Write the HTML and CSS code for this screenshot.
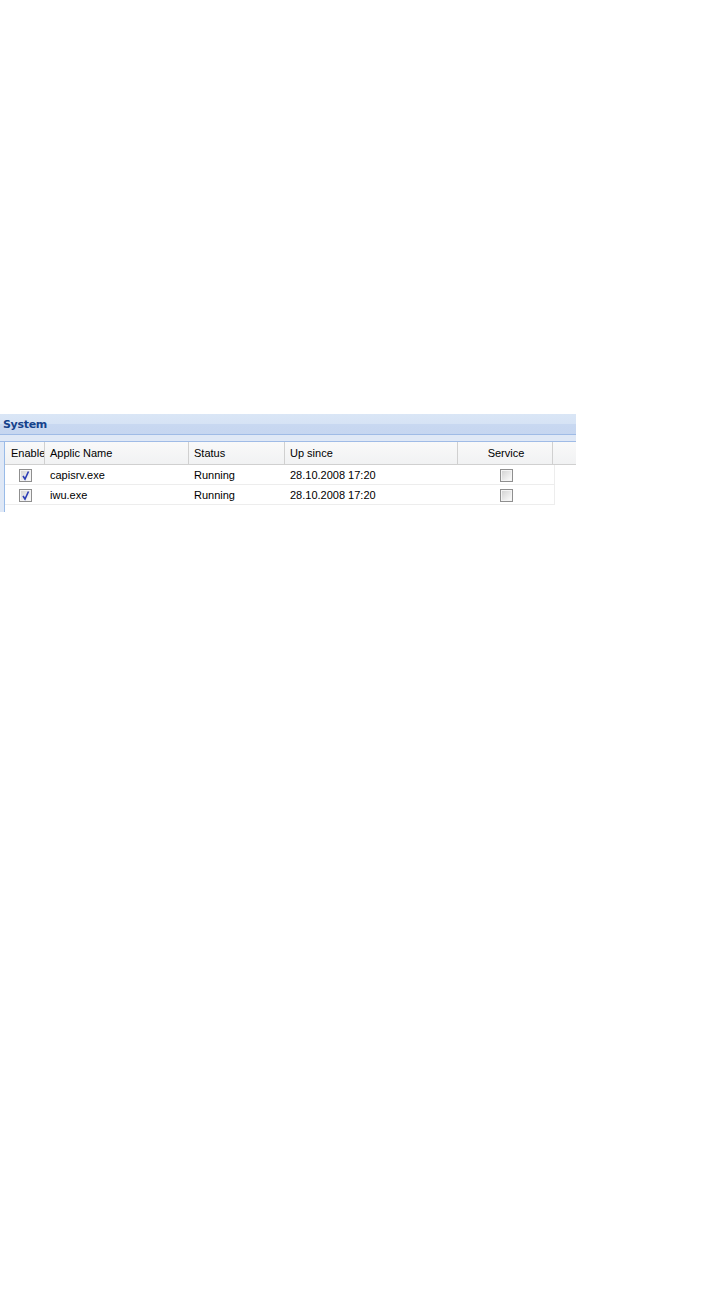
FILE: index.html
```html
<!DOCTYPE html>
<html>
<head>
<meta charset="utf-8">
<link rel="stylesheet" href="styles.css">
</head>
<body>
<div class="panel">
  <div class="panel-header"><span class="title">System</span></div>
  <div class="panel-tbar"></div>
  <div class="panel-body">
    <div class="grid">
      <div class="grid-head">
        <div class="hcell c-en">Enabled</div>
        <div class="hcell c-name">Applic Name</div>
        <div class="hcell c-status">Status</div>
        <div class="hcell c-up">Up since</div>
        <div class="hcell c-svc center">Service</div>
        <div class="hcell c-fill"></div>
      </div>
      <div class="row">
        <div class="cell c-en center"><span class="cb"><svg class="tick" viewBox="0 0 11 11" width="11" height="11"><path d="M3 6 L5 9 L8.5 1.5" fill="none" stroke="#2b3db5" stroke-width="1.6"/></svg></span></div>
        <div class="cell c-name">capisrv.exe</div>
        <div class="cell c-status">Running</div>
        <div class="cell c-up">28.10.2008 17:20</div>
        <div class="cell c-svc center"><span class="cb"></span></div>
      </div>
      <div class="row">
        <div class="cell c-en center"><span class="cb"><svg class="tick" viewBox="0 0 11 11" width="11" height="11"><path d="M3 6 L5 9 L8.5 1.5" fill="none" stroke="#2b3db5" stroke-width="1.6"/></svg></span></div>
        <div class="cell c-name">iwu.exe</div>
        <div class="cell c-status">Running</div>
        <div class="cell c-up">28.10.2008 17:20</div>
        <div class="cell c-svc center"><span class="cb"></span></div>
      </div>
    </div>
  </div>
</div>
</body>
</html>
```
FILE: styles.css
```css
html, body {
  margin: 0;
  padding: 0;
  background: #fff;
  font-family: "Liberation Sans", Arial, sans-serif;
  font-size: 11px;
  color: #000;
}
.panel {
  width: 576px;
  margin-top: 414px;
}
.panel-header {
  height: 20px;
  background: linear-gradient(#dae6f6 0%, #d6e3f5 50%, #c8d8f1 51%, #c6d6f0 100%);
  display: flex;
  align-items: center;
  padding-left: 3px;
}
.title {
  font-family: "DejaVu Sans", Verdana, sans-serif;
  font-weight: bold;
  font-size: 11px;
  letter-spacing: -0.3px;
  color: #15428b;
}
.panel-tbar {
  height: 6px;
  background: #dfe8f6;
  border-top: 1px solid #9fbbe6;
  border-bottom: 1px solid #9fbbe6;
}
.panel-body {
  background: #dfe8f6;
  padding-left: 4px;
  height: 70px;
}
.grid {
  height: 70px;
  background: #fff;
  border-left: 1px solid #99bbe8;
}
.grid-head {
  display: flex;
  height: 22px;
  background: linear-gradient(#f9f9f9, #f1f2f3);
  border-bottom: 1px solid #d0d0d0;
}
.hcell {
  box-sizing: border-box;
  height: 22px;
  line-height: 22px;
  padding-left: 5px;
  border-right: 1px solid #d0d0d0;
  white-space: nowrap;
  overflow: hidden;
  color: #000;
}
.hcell.c-fill { border-right: none; flex: 1; }
.hcell.c-en { padding-left: 6px; }
.c-en { width: 40px; }
.c-name { width: 144px; }
.c-status { width: 96px; }
.c-up { width: 173px; }
.c-svc { width: 95px; }
.hcell.center { text-align: center; padding-left: 2px; }
.row {
  display: flex;
  width: 549px;
  height: 19px;
  border-bottom: 1px solid #ededed;
  border-right: 1px solid #ededed;
}
.cell {
  box-sizing: border-box;
  height: 19px;
  line-height: 21px;
  padding-left: 5px;
  white-space: nowrap;
  overflow: hidden;
}
.cell.center {
  display: flex;
  align-items: center;
  justify-content: center;
  padding-left: 0;
  padding-top: 1px;
}
.cell.c-svc { padding-left: 1px; }
.cb {
  display: inline-flex;
  align-items: center;
  justify-content: center;
  box-sizing: border-box;
  width: 13px;
  height: 13px;
  border: 1px solid #8f8f8f;
  background: linear-gradient(135deg, #d0d0d0 0%, #ececec 60%, #ffffff 100%);
  box-shadow: inset 0 0 0 1px #f4f4f4;
}
.tick { display: block; }
```
